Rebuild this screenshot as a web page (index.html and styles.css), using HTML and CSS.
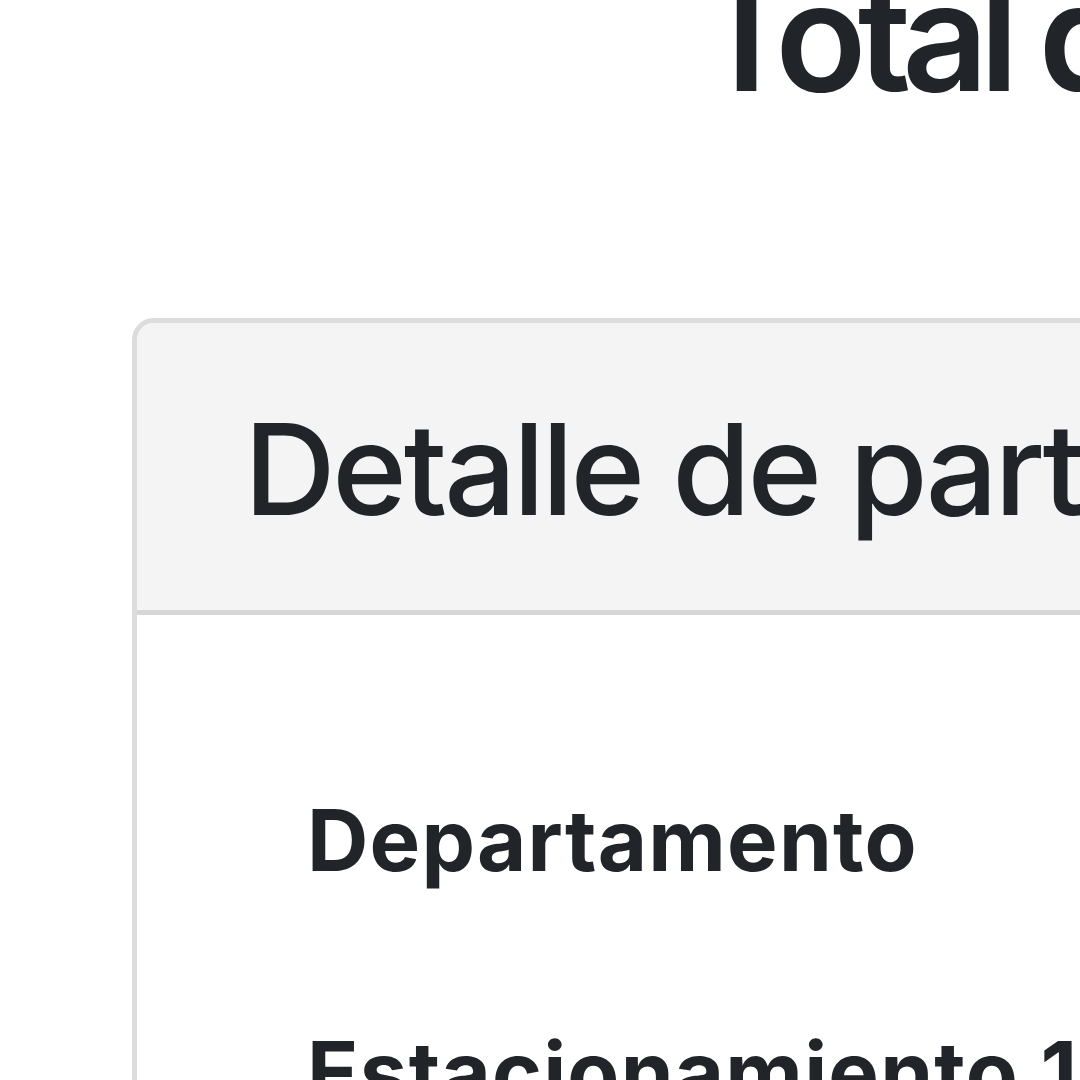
FILE: index.html
```html
<!DOCTYPE html>
<html lang="es">
<head>
<meta charset="utf-8">
<title>Detalle</title>
<link rel="stylesheet" href="styles.css">
</head>
<body>
<div class="page">
  <h1 class="page-title">Total de la compra</h1>
  <div class="card">
    <div class="card-header">
      <h2 class="card-title">Detalle de partidas</h2>
    </div>
    <div class="card-body">
      <div class="row"><span class="label">Departamento</span></div>
      <div class="row"><span class="label">Estacionamiento 104</span></div>
      <div class="row"><span class="label">Bodega</span></div>
    </div>
  </div>
</div>
</body>
</html>
```
FILE: styles.css
```css
html, body {
  margin: 0;
  padding: 0;
  background: #ffffff;
  overflow: hidden;
}
body {
  font-family: Inter, "Noto Sans", "Liberation Sans", sans-serif;
  color: #212529;
  width: 1080px;
  height: 1080px;
}
.page {
  width: 2400px;
}
.page-title {
  margin: -53px 0 0 0;
  padding-left: 697px;
  font-size: 150px;
  font-weight: 600;
  line-height: 1.2;
  white-space: nowrap;
  letter-spacing: -9px;
}
.card {
  margin: 191px 0 0 132px;
  width: 1800px;
  border: 5px solid #dcdcdc;
  border-radius: 22px;
  overflow: hidden;
}
.card-header {
  background: #f4f4f4;
  border-bottom: 5px solid #d6d6d6;
  padding: 70px 0 65px 107px;
}
.card-title {
  margin: 0;
  font-size: 127px;
  font-weight: 500;
  line-height: 1.2;
  white-space: nowrap;
  letter-spacing: -3.3px;
}
.card-body {
  padding: 175px 0 200px 170px;
  display: flex;
  flex-direction: column;
  gap: 130px;
}
.row {
  font-size: 85px;
  font-weight: 700;
  line-height: 1.2;
  white-space: nowrap;
  letter-spacing: 1.2px;
}
```
